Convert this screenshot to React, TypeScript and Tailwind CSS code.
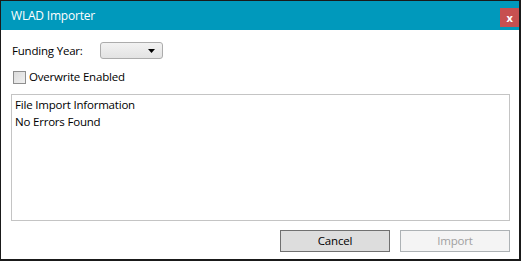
import React from 'react'

export default function App() {
  return (
    <div
      className="w-[521px] h-[261px] bg-white border-l border-r-2 border-t border-b-2 border-[#1a1a1a] flex flex-col text-[11.5px] tracking-[-0.2px] text-black"
      style={{ fontFamily: '"Segoe UI", "Open Sans", sans-serif' }}
    >
      {/* Title bar */}
      <div className="h-[29px] bg-[#0099bc] flex items-start justify-between pl-[10px]">
        <span className="text-white text-[12px] leading-none mt-[9px]">WLAD Importer</span>
        <button className="w-[19px] h-[19px] mt-[7px] bg-[#c75050] flex items-center justify-center text-white text-[11px] font-bold leading-none">
          x
        </button>
      </div>

      <div className="flex flex-col flex-1 pl-[10px] pr-[9px]">
        {/* Funding year */}
        <div className="flex items-center mt-[12px] h-[17px]">
          <span className="pl-[1px] w-[89px]">Funding Year:</span>
          <div className="w-[63px] h-[17px] rounded-[3px] border border-[#acacac] bg-gradient-to-b from-[#f2f2f2] to-[#e3e3e3] flex items-center justify-end pr-[7px]">
            <svg width="7" height="4" viewBox="0 0 7 4">
              <path d="M0 0H7L3.5 4Z" fill="#000" />
            </svg>
          </div>
        </div>

        {/* Overwrite */}
        <label className="flex items-center mt-[11px] h-[14px]">
          <span className="ml-[2px] w-[13px] h-[13px] border border-[#8f8f8f] bg-gradient-to-br from-[#dcdcdc] to-[#f0f0f0]" />
          <span className="ml-[3px]">Overwrite Enabled</span>
        </label>

        {/* Info box */}
        <div className="mt-[10px] h-[127px] border border-[#c4c4c4] px-[3px] pt-[1px] leading-[17px]">
          <div>File Import Information</div>
          <div>No Errors Found</div>
        </div>

        {/* Buttons */}
        <div className="flex justify-end gap-[10px] mt-[9px]">
          <button className="w-[110px] h-[22px] bg-[#dddddd] border border-[#707070] text-black">
            Cancel
          </button>
          <button className="w-[110px] h-[22px] bg-[#f4f4f4] border border-[#adb2b5] text-[#a0a0a0]">
            Import
          </button>
        </div>
      </div>
    </div>
  )
}
